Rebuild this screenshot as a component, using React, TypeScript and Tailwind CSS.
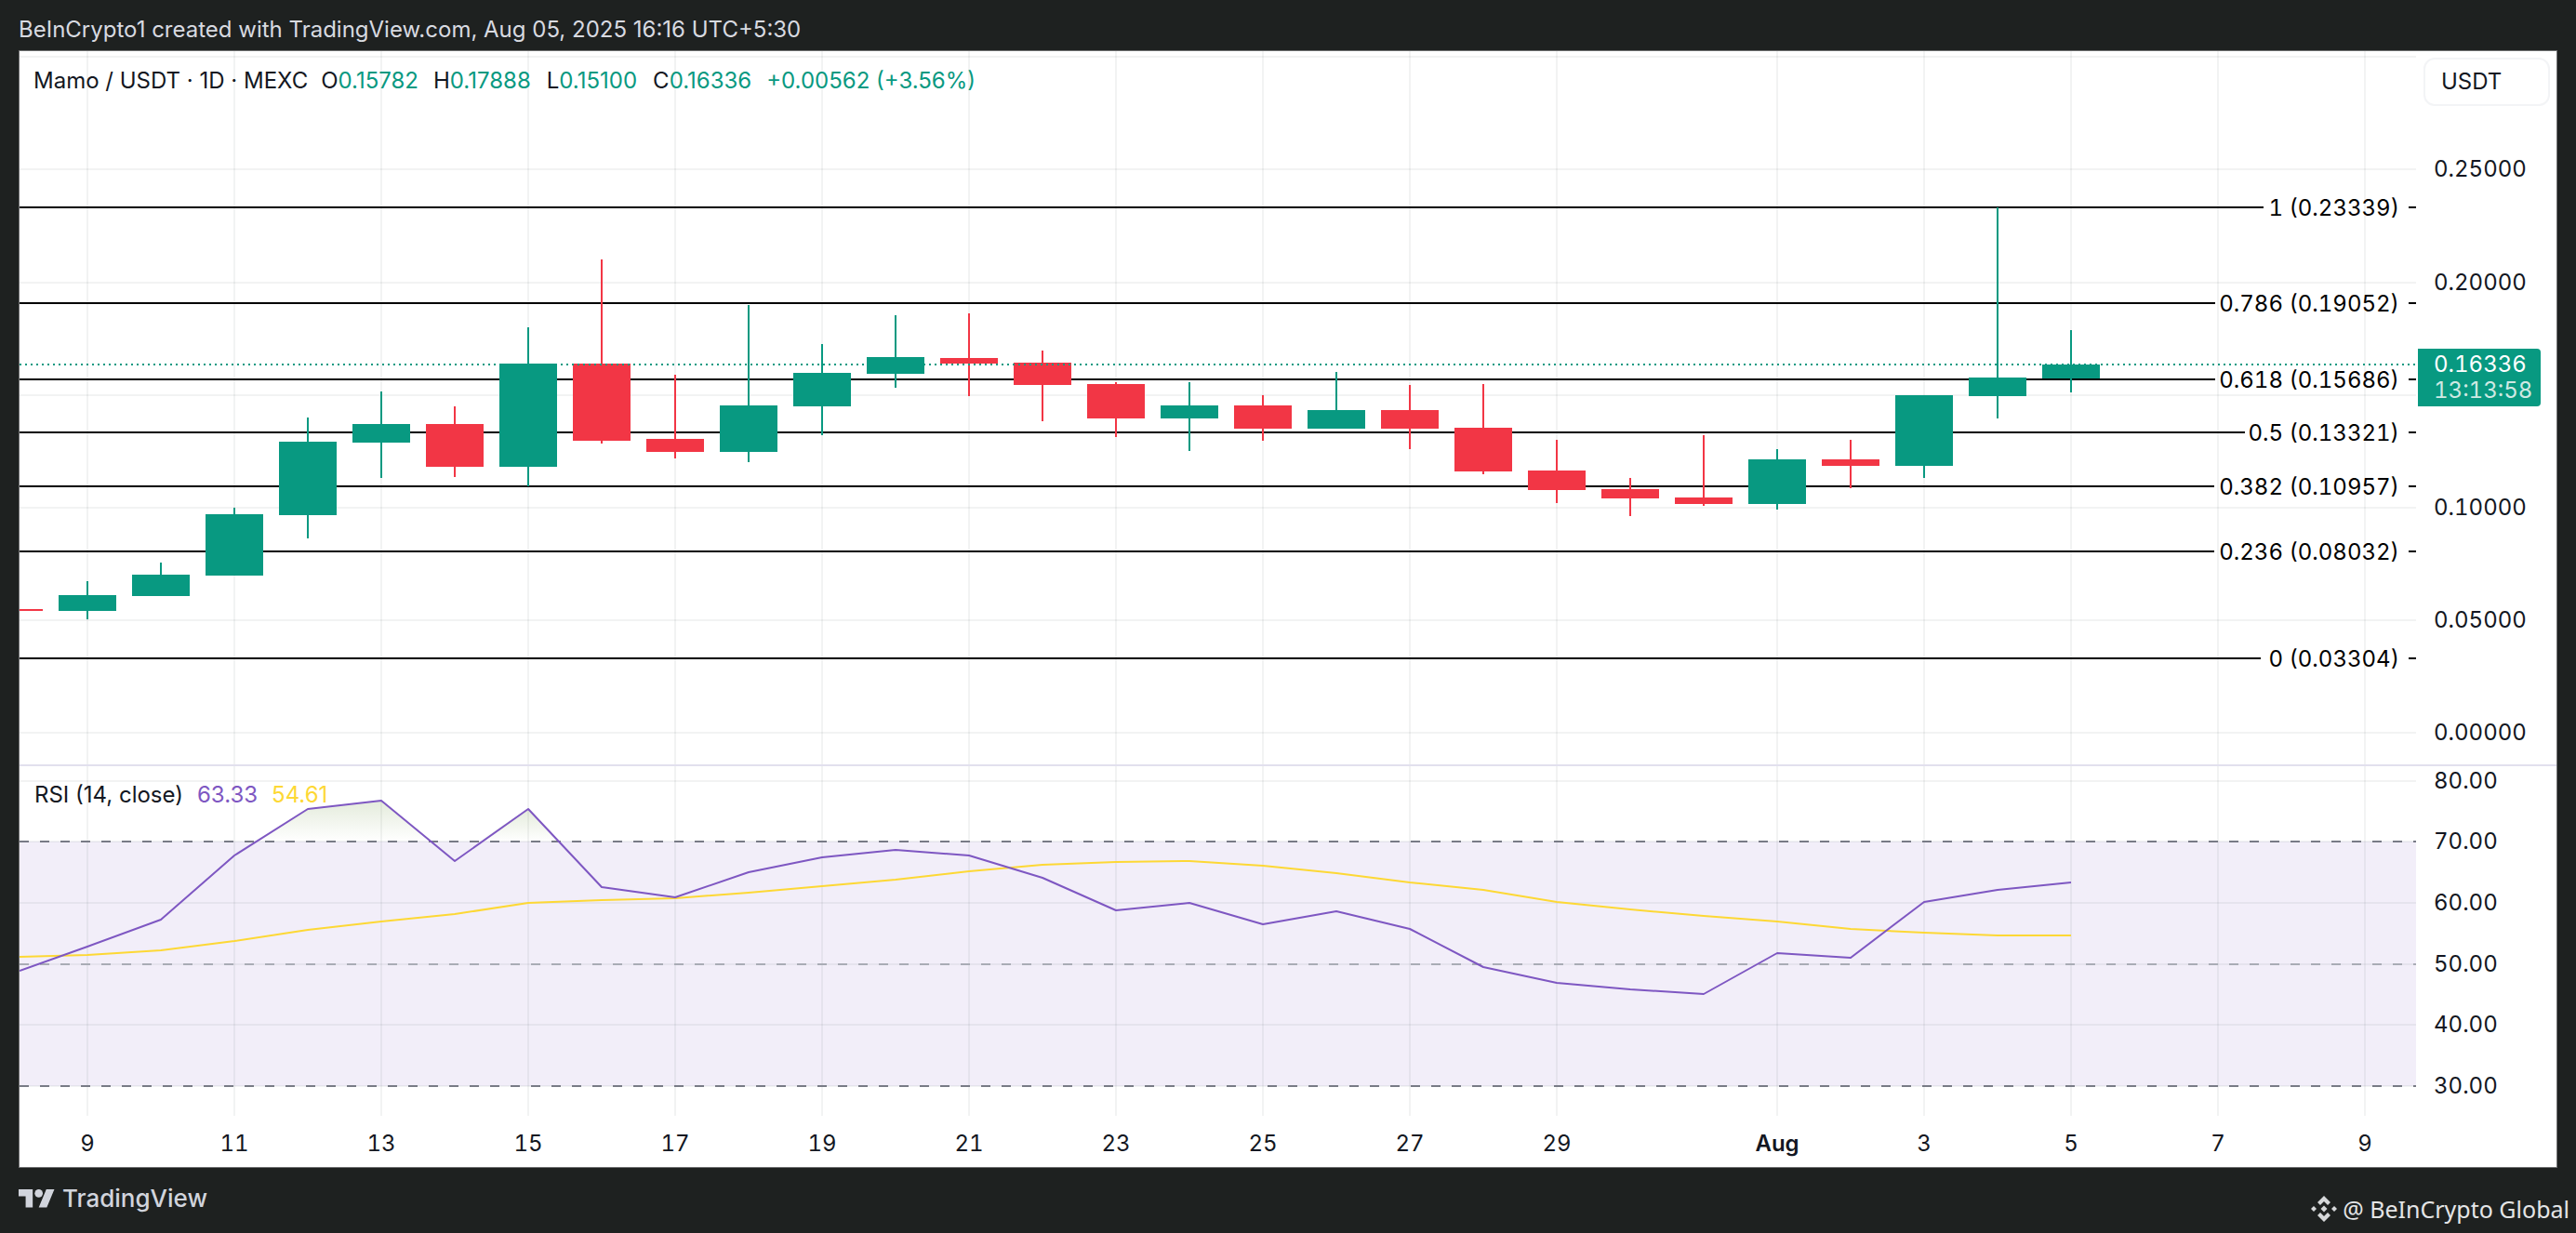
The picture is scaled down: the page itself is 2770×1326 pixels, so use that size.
const GREEN = "#089981";
const RED = "#f23645";

// [x, bodyTop, bodyBottom, wickTop, wickBottom, up]
const candles: [number, number, number, number, number, boolean][] = [
  [15, 655, 657, 655, 657, false],
  [94, 640, 657, 625, 666, true],
  [173, 618, 641, 605, 641, true],
  [252, 553, 619, 546, 619, true],
  [331, 475, 554, 449, 579, true],
  [410, 456, 476, 421, 514, true],
  [489, 456, 502, 437, 513, false],
  [568, 391, 502, 352, 523, true],
  [647, 391, 474, 279, 477, false],
  [726, 472, 486, 403, 493, false],
  [805, 436, 486, 328, 497, true],
  [884, 401, 437, 370, 468, true],
  [963, 384, 402, 339, 417, true],
  [1042, 385, 391, 337, 426, false],
  [1121, 390, 414, 377, 453, false],
  [1200, 413, 450, 411, 470, false],
  [1279, 436, 450, 411, 485, true],
  [1358, 436, 461, 425, 474, false],
  [1437, 441, 461, 400, 461, true],
  [1516, 441, 461, 414, 483, false],
  [1595, 460, 507, 413, 510, false],
  [1674, 506, 527, 473, 541, false],
  [1753, 526, 536, 514, 555, false],
  [1832, 535, 542, 468, 544, false],
  [1911, 494, 542, 483, 548, true],
  [1990, 494, 501, 473, 525, false],
  [2069, 425, 501, 425, 514, true],
  [2148, 406, 426, 223, 450, true],
  [2227, 392, 407, 355, 422, true],
];

const fibs: [string, number, number][] = [
  ["1 (0.23339)", 223, 2434],
  ["0.786 (0.19052)", 326, 2382],
  ["0.618 (0.15686)", 408, 2382],
  ["0.5 (0.13321)", 465, 2414],
  ["0.382 (0.10957)", 523, 2381],
  ["0.236 (0.08032)", 593, 2381],
  ["0 (0.03304)", 708, 2431],
];

const gridX = [94, 252, 410, 568, 726, 884, 1042, 1200, 1358, 1516, 1674, 1911, 2069, 2227, 2385, 2543];
const timeLabels: [string, number, boolean][] = [
  ["9", 94, false], ["11", 252, false], ["13", 410, false], ["15", 568, false], ["17", 726, false],
  ["19", 884, false], ["21", 1042, false], ["23", 1200, false], ["25", 1358, false], ["27", 1516, false],
  ["29", 1674, false], ["Aug", 1911, true], ["3", 2069, false], ["5", 2227, false], ["7", 2385, false], ["9", 2543, false],
];
const priceGrid = [61, 182, 304, 425, 546, 667, 788];
const priceLabels: [string, number][] = [
  ["0.25000", 182], ["0.20000", 304], ["0.10000", 546], ["0.05000", 667], ["0.00000", 788],
];
const rsiLabels: [string, number][] = [
  ["80.00", 840], ["70.00", 905], ["60.00", 971], ["50.00", 1037], ["40.00", 1102], ["30.00", 1168],
];

const rsi =
  "21,1044 94,1018 173,989 252,920 331,870 410,861 489,926 568,870 647,954 726,965 805,938 884,922 963,914 1042,920 1121,944 1200,979 1279,971 1358,994 1437,980 1516,999 1595,1040 1674,1057 1753,1064 1832,1069 1911,1025 1990,1030 2069,970 2148,957 2227,949";
const ma =
  "21,1029 94,1027 173,1022 252,1012 331,1000 410,991 489,983 568,971 647,968 726,966 805,960 884,953 963,946 1042,937 1121,930 1200,927 1279,926 1358,931 1437,939 1516,949 1595,957 1674,970 1753,978 1832,985 1911,991 1990,999 2069,1003 2148,1006 2227,1006";

function MainChart() {
  return (
    <svg width={2577} height={767} viewBox="21 55 2577 767" className="block">
      <g shapeRendering="crispEdges">
        {gridX.map((x) => (
          <rect key={x} x={x - 1} y={55} width={2} height={767} fill="rgba(42,46,57,0.06)" />
        ))}
        {priceGrid.map((y) => (
          <rect key={y} x={21} y={y - 1} width={2577} height={2} fill="rgba(42,46,57,0.06)" />
        ))}
        {fibs.map(([label, y, end]) => (
          <g key={label}>
            <rect x={21} y={y - 1} width={end - 21} height={2} fill="#000" />
            <rect x={2590} y={y - 1} width={8} height={2} fill="#000" />
          </g>
        ))}
        {candles.map(([x, bt, bb, wt, wb, up]) => {
          const left = Math.max(21, x - 31);
          return (
            <g key={x} fill={up ? GREEN : RED}>
              {x > 21 && <rect x={x - 1} y={wt} width={2} height={wb - wt} />}
              <rect x={left} y={bt} width={x + 31 - left} height={bb - bt} />
            </g>
          );
        })}
        <line x1={21} x2={2598} y1={392} y2={392} stroke={GREEN} strokeWidth={2} strokeDasharray="2 4" />
      </g>
    </svg>
  );
}

function RsiChart() {
  const dash = (y: number, color: string) => (
    <rect x={21} y={y - 1} width={2577} height={2} fill={color} />
  );
  return (
    <svg width={2577} height={376} viewBox="21 824 2577 376" className="block">
      <defs>
        <linearGradient id="ob" x1="0" y1="0" x2="0" y2="1">
          <stop offset="0" stopColor="#5f8a2e" stopOpacity={0.17} />
          <stop offset="1" stopColor="#5f8a2e" stopOpacity={0} />
        </linearGradient>
        <pattern id="dashA" x={21} y={0} width={22} height={2000} patternUnits="userSpaceOnUse">
          <rect x={0} y={0} width={10} height={2000} fill="#787b86" />
        </pattern>
        <pattern id="dashB" x={21} y={0} width={22} height={2000} patternUnits="userSpaceOnUse">
          <rect x={0} y={0} width={10} height={2000} fill="#a9acb5" />
        </pattern>
      </defs>
      <g shapeRendering="crispEdges">
        <rect x={21} y={905} width={2577} height={263} fill="rgba(126,87,194,0.1)" />
        {gridX.map((x) => (
          <rect key={x} x={x - 1} y={824} width={2} height={376} fill="rgba(42,46,57,0.06)" />
        ))}
        {[840, 905, 971, 1037, 1102, 1168].map((y) => (
          <rect key={y} x={21} y={y - 1} width={2577} height={2} fill="rgba(42,46,57,0.06)" />
        ))}
        {dash(905, "url(#dashA)")}
        {dash(1037, "url(#dashB)")}
        {dash(1168, "url(#dashA)")}
      </g>
      <polygon points="275.5,905 331,870 410,861 464,905" fill="url(#ob)" />
      <polygon points="514,905 568,870 601.6,905" fill="url(#ob)" />
      <polyline points={ma} fill="none" stroke="#fdd835" strokeWidth={2} strokeLinejoin="round" />
      <polyline points={rsi} fill="none" stroke="#7e57c2" strokeWidth={2} strokeLinejoin="round" />
    </svg>
  );
}

function AxisLabel({ text, y, offset }: { text: string; y: number; offset: number }) {
  return (
    <div
      className="absolute left-[19px] -translate-y-1/2 text-[24px] leading-[30px] tabular-nums text-[#131722] whitespace-nowrap"
      style={{ top: y - offset }}
    >
      {text}
    </div>
  );
}

function TvLogo() {
  return (
    <svg width={39} height={20} viewBox="0 4 36 18.4" fill="#d1d4dc" className="block">
      <path d="M14 22H7V11H0V4h14v18zM28 22h-8l7.5-18h8L28 22z" />
      <circle cx="20" cy="8" r="4" />
    </svg>
  );
}

function DiamondLogo() {
  return (
    <svg width={28} height={28} viewBox="0 0 28 28" fill="#d6d8da" className="block">
      <path d="M14 0l7 7-3 3-4-4-4 4-3-3z" />
      <path d="M14 28l-7-7 3-3 4 4 4-4 3 3z" />
      <path d="M14 10.5l3.5 3.5-3.5 3.5-3.5-3.5z" />
      <path d="M3 11l3 3-3 3-3-3z" />
      <path d="M25 11l3 3-3 3-3-3z" />
    </svg>
  );
}

export default function App() {
  return (
    <div className="w-[2770px] h-[1326px] bg-[#1e2120] flex flex-col overflow-hidden [font-family:Inter,sans-serif]">
      <header className="h-[54px] shrink-0 pl-5 flex items-center pt-[10px] text-[24px] text-[#d8dae0] whitespace-nowrap">
        BeInCrypto1 created with TradingView.com, Aug 05, 2025 16:16 UTC+5:30
      </header>

      <main className="mx-5 h-[1202px] shrink-0 border border-[#6e6f70] bg-white flex flex-col">
        <section className="h-[767px] shrink-0 flex">
          <div className="relative w-[2577px] shrink-0">
            <MainChart />
            <div className="absolute left-[15px] top-[16px] h-[32px] flex items-center text-[24px] text-[#131722] whitespace-nowrap">
              <span>Mamo / USDT · 1D · MEXC</span>
              <span className="ml-[14px]">O</span>
              <span className="text-[#089981]">0.15782</span>
              <span className="ml-[16px]">H</span>
              <span className="text-[#089981]">0.17888</span>
              <span className="ml-[17px]">L</span>
              <span className="text-[#089981]">0.15100</span>
              <span className="ml-[17px]">C</span>
              <span className="text-[#089981]">0.16336</span>
              <span className="ml-[16px] text-[#089981]">+0.00562 (+3.56%)</span>
            </div>
            {fibs.map(([label, y]) => (
              <div
                key={label}
                className="absolute right-[18px] -translate-y-1/2 text-[24px] leading-[30px] tabular-nums text-black whitespace-nowrap"
                style={{ top: y - 55 + 1 }}
              >
                {label}
              </div>
            ))}
          </div>
          <div className="relative flex-1">
            <div className="absolute left-[8px] top-[7px] w-[136px] h-[52px] rounded-[12px] border-2 border-[#f3f4f6] flex items-center pl-[17px] text-[24px] text-[#131722]">
              USDT
            </div>
            {priceLabels.map(([t, y]) => (
              <AxisLabel key={t} text={t} y={y} offset={55} />
            ))}
            <div className="absolute left-[2px] top-[320px] w-[132px] h-[62px] bg-[#089981] rounded-r-[4px] flex flex-col pl-[17px] justify-center text-[24px] leading-[28px] tabular-nums whitespace-nowrap">
              <span className="text-white">0.16336</span>
              <span className="text-[#cfe9e3]">13:13:58</span>
            </div>
          </div>
        </section>

        <section className="h-[378px] shrink-0 border-t-2 border-[#e2e0ee] flex">
          <div className="relative w-[2577px] shrink-0">
            <RsiChart />
            <div className="absolute left-[16px] top-[13px] h-[36px] flex items-center text-[24px] whitespace-nowrap">
              <span className="text-[#131722]">RSI (14, close)</span>
              <span className="ml-[15px] text-[#7e57c2]">63.33</span>
              <span className="ml-[15px] text-[#fdd835]">54.61</span>
            </div>
          </div>
          <div className="relative flex-1">
            {rsiLabels.map(([t, y]) => (
              <AxisLabel key={t} text={t} y={y} offset={824} />
            ))}
          </div>
        </section>

        <footer className="relative flex-1">
          {timeLabels.map(([t, x, bold]) => (
            <div
              key={t + x}
              className={
                bold
                  ? "absolute top-[15px] -translate-x-1/2 text-[24px] leading-[30px] font-semibold text-[#131722]"
                  : "absolute top-[15px] -translate-x-1/2 text-[24px] leading-[30px] tabular-nums text-[#131722]"
              }
              style={{ left: x - 21 }}
            >
              {t}
            </div>
          ))}
        </footer>
      </main>

      <div className="flex-1 flex items-center justify-between pl-5 pr-[7px]">
        <div className="flex items-center gap-2 -mt-[4px]">
          <TvLogo />
          <span className="text-[26px] leading-none font-medium text-[#d1d4dc]">TradingView</span>
        </div>
        <div className="flex items-center gap-[6px] [font-family:'Noto_Sans',sans-serif] text-[25px] leading-none text-[#e4e5e6] mt-[18px]">
          <DiamondLogo />
          <span>@ BeInCrypto Global</span>
        </div>
      </div>
    </div>
  );
}
